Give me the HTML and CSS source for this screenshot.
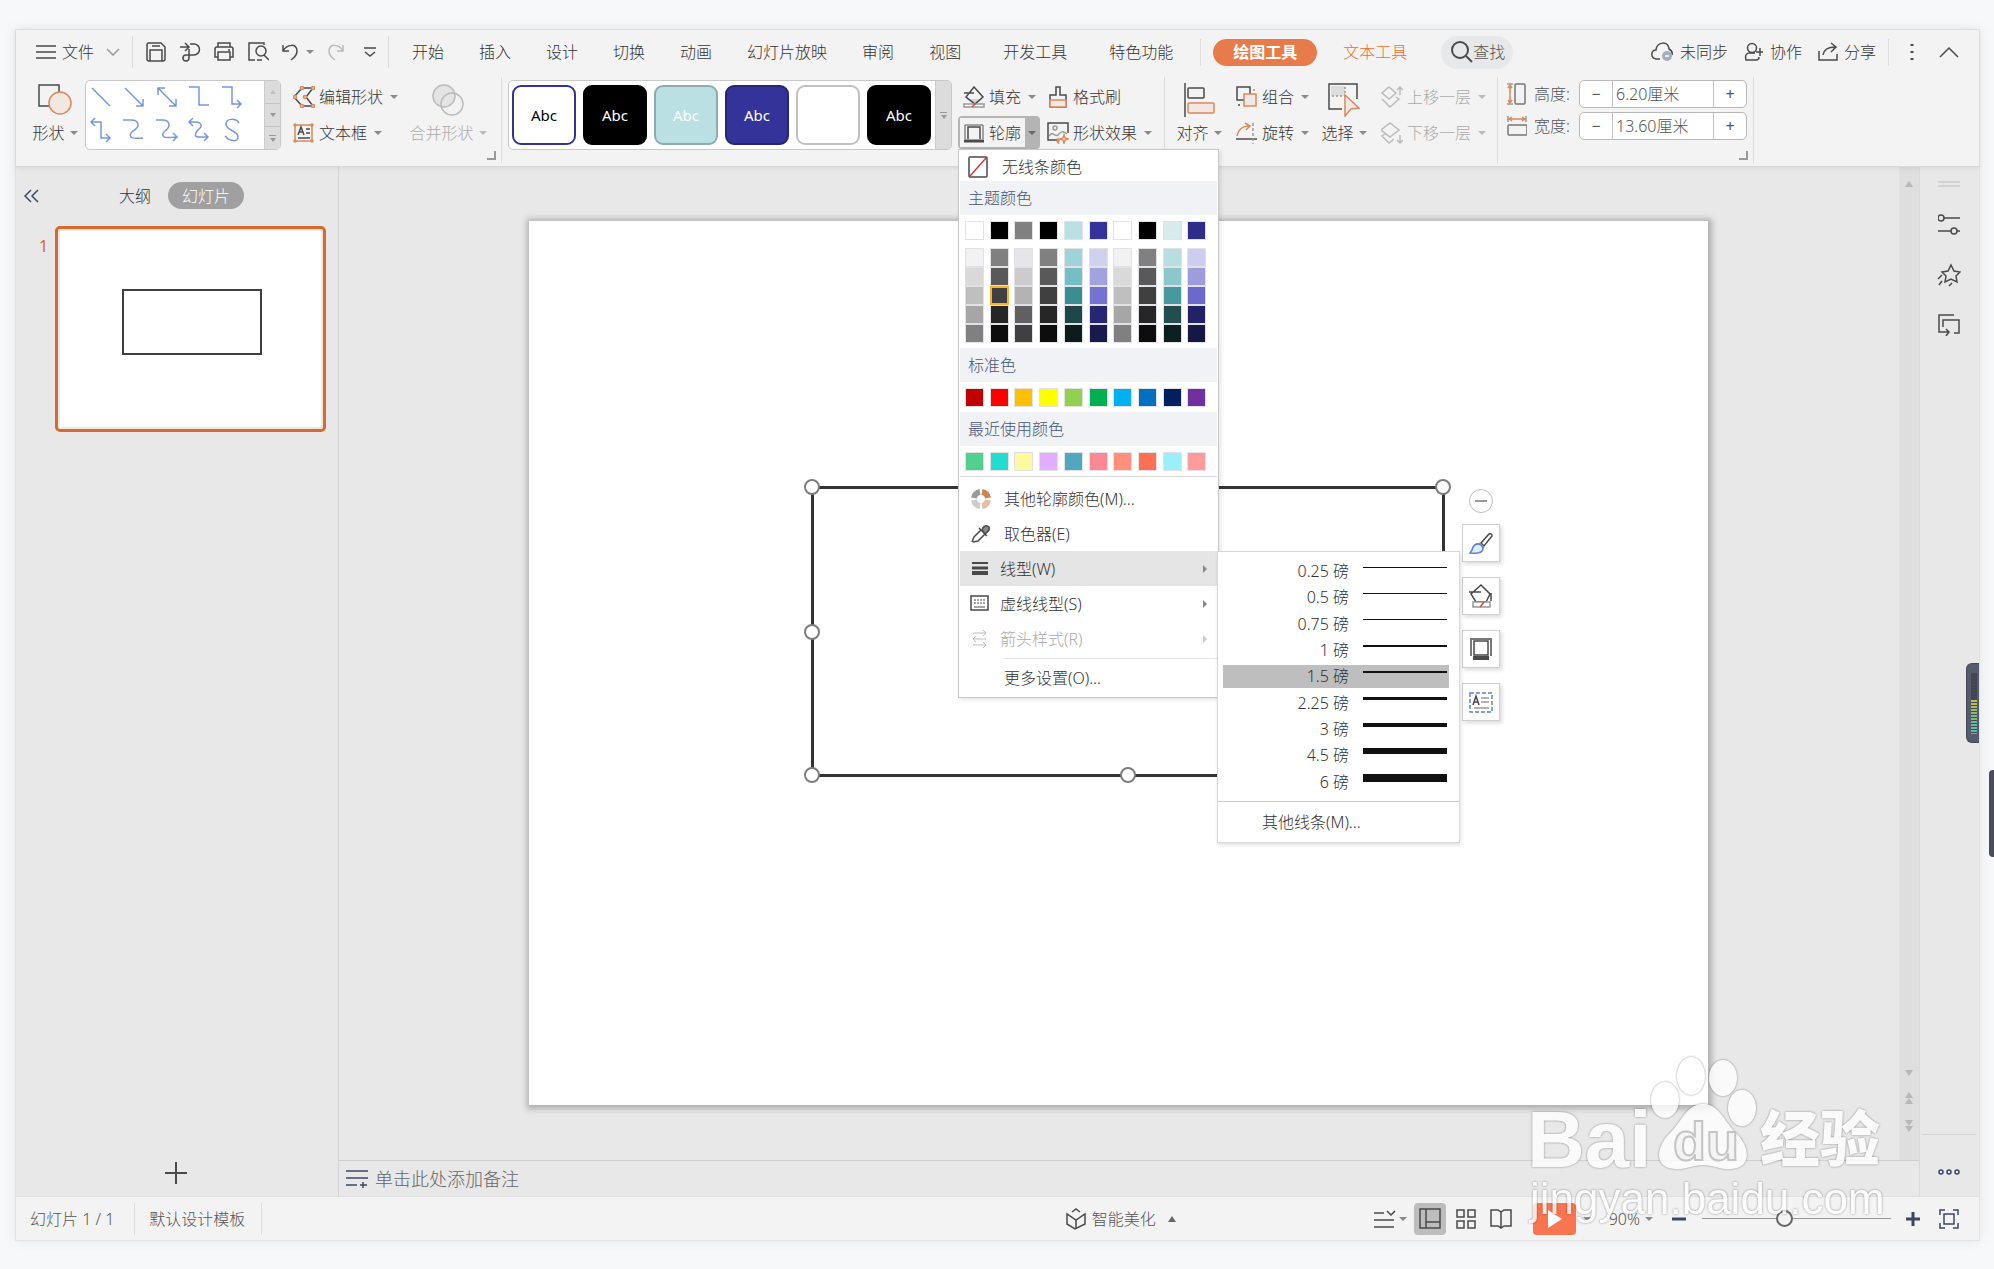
FILE: index.html
```html
<!DOCTYPE html>
<html lang="zh-CN">
<head>
<meta charset="utf-8">
<title>演示文稿</title>
<link rel="stylesheet" href="styles.css">
</head>
<body>
<div class="app">
  <header class="top">
    <nav class="menubar">
      <button class="file"><svg width="20" height="20" viewBox="0 0 20 20"><path d="M0 4h20M0 10h20M0 16h20"/></svg><span>文件</span><svg class="dim" width="14" height="8" viewBox="0 0 14 8"><path d="M1 1l6 6 6-6"/></svg></button>
      <i class="rule"></i>
      <div class="quick">
        <button aria-label="保存"><svg width="21" height="20" viewBox="0 0 21 20"><path d="M1 3q0-2 2-2h12l4 4v12q0 2-2 2H3q-2 0-2-2zM4 19V8h12v11M6 4h8"/></svg></button>
        <button aria-label="输出"><svg width="21" height="20" viewBox="0 0 21 20"><path d="M0 5h8M5 1l4 4-4 4M10 2h4a5 5 0 0 1 0 11H6a3 3 0 1 0 3 3V7"/></svg></button>
        <button aria-label="打印"><svg width="21" height="20" viewBox="0 0 21 20"><path d="M4 5V1h12v4M4 15H1V7q0-2 2-2h14q2 0 2 2v8h-3M4 10h12v8H4zM14 8h2"/></svg></button>
        <button aria-label="预览"><svg width="21" height="20" viewBox="0 0 21 20"><path d="M7 18H1V1h15v2"/><circle cx="13" cy="9" r="5"/><path d="M16 13l5 5M9 18h5"/></svg></button>
        <button class="undo" aria-label="撤销"><svg width="18" height="20" viewBox="0 0 18 20"><path d="M1 3v6h6M1 9C5 2 15 1 15 9q0 5-6 9"/></svg><b class="caret"></b></button>
        <button class="redo off" aria-label="恢复" disabled><svg width="18" height="20" viewBox="0 0 18 20"><path d="M16 3v6h-6M16 9C12 2 2 1 2 9q0 5 6 9"/></svg></button>
        <button class="more" aria-label="更多"><svg width="12" height="12" viewBox="0 0 12 12"><path d="M0 2h12M1 6l5 4 5-4"/></svg></button>
      </div>
      <i class="rule"></i>
      <div class="tabs">
        <button>开始</button><button>插入</button><button>设计</button><button>切换</button><button>动画</button><button>幻灯片放映</button><button>审阅</button><button>视图</button><button class="far">开发工具</button><button class="far">特色功能</button>
      </div>
      <i class="rule short"></i>
      <button class="pill-tab">绘图工具</button>
      <button class="text-tab">文本工具</button>
      <button class="find"><svg width="22" height="22" viewBox="0 0 22 22"><circle cx="9" cy="9" r="8"/><path d="M15 15l6 6"/></svg>查找</button>
      <div class="account">
        <button><svg width="23" height="20" viewBox="0 0 23 20"><path d="M9 17H5C-1 16 0 8 5 8 6-1 18-1 18 7q4 2 3 6"/><circle cx="16" cy="14" r="5" class="badge"/><path d="M14 14h4" class="w"/></svg>未同步</button>
        <button><svg width="20" height="20" viewBox="0 0 20 20"><circle cx="8" cy="6" r="4.500"/><path d="M12 18H2q-2-7 4-7h5M12 18q3 0 3-3M12 10h7M16 6v8"/></svg>协作</button>
        <button><svg width="20" height="20" viewBox="0 0 20 20"><path d="M1 9v9h18v-6M5 13C6 7 10 5 17 5M13 1l5 4-5 5"/></svg>分享</button>
        <i class="rule short"></i>
        <button aria-label="菜单"><svg width="4" height="18" viewBox="0 0 4 18"><path d="M2 1v2M2 8v2M2 15v2" stroke-width="3"/></svg></button>
        <button aria-label="折叠"><svg width="20" height="12" viewBox="0 0 20 12"><path d="M1 11l9-9 9 9"/></svg></button>
      </div>
    </nav>

    <div class="ribbon">
      <button class="big shape"><svg width="34" height="32" viewBox="0 0 34 32"><path d="M1 1h20v21H1z"/><circle cx="22" cy="19" r="11" class="of"/></svg><span>形状<b class="caret"></b></span></button>
      <div class="lines">
        <svg width="178" height="67" viewBox="0 0 178 67"><path d="M6 7l18 18M39 7l18 18M57 18v7h-7M72 7l18 18M72 14V7h7M90 18v7h-7M103 6h10v18h10M136 6h10v17h9M151 19l4 4-4 4M5 41h10v16h9M9 37l-4 4 4 4M20 53l4 4-4 4M37 39h8q7 0 7 5 0 3-5 6-4 3-2 6 1 2 12 1M70 39h6q7 0 7 5 0 3-4 6-4 3-1 6 1 1 13 0M87 52l4 4-4 4M103 41h6q7 0 6 5l-4 4q-4 6 2 6h9M107 37l-4 4 4 4M118 52l4 4-4 4M153 42c-3-5-13-5-13 1 0 7 12 6 12 13 0 5-8 5-13-1"/></svg>
        <div class="spin"><i class="up"></i><i class="dn"></i><i class="ex"></i></div>
      </div>
      <div class="stack edit">
        <button><svg width="22" height="22" viewBox="0 0 22 22"><path d="M9 2h11l-7 9 7 9H9L1 11z"/><g class="of"><circle cx="9" cy="2" r="1.500"/><circle cx="20" cy="2" r="1.500"/><circle cx="12" cy="11" r="1.500"/><circle cx="20" cy="20" r="1.500"/><circle cx="9" cy="20" r="1.500"/><circle cx="2" cy="11" r="1.500"/></g></svg>编辑形状<b class="caret"></b></button>
        <button><svg width="22" height="20" viewBox="0 0 22 20"><path d="M2 2h17v16H2z" class="o"/><path d="M5 12l3-8 3 8M6 9h4M13 6h4M13 10h4M5 15h12"/><g class="of"><circle cx="2" cy="2" r="1"/><circle cx="19" cy="2" r="1"/><circle cx="2" cy="18" r="1"/><circle cx="19" cy="18" r="1"/></g></svg>文本框<b class="caret"></b></button>
      </div>
      <button class="big merge off" disabled><svg width="34" height="32" viewBox="0 0 34 32"><circle cx="13" cy="12" r="11" fill="#e4e4e4"/><circle cx="21" cy="20" r="11"/></svg><span>合并形状<b class="caret"></b></span></button>
      <i class="rule tall corner"></i>
      <div class="styles">
        <button class="t1">Abc</button><button class="t2">Abc</button><button class="t3">Abc</button><button class="t4">Abc</button><button class="t5" aria-label="无"></button><button class="t2">Abc</button>
        <div class="spin"><i class="ex"></i></div>
      </div>
      <div class="stack paint">
        <button class="fill"><svg width="22" height="22" viewBox="0 0 22 22"><path d="M3 13h17l-8 6z" fill="#d5d5d5" stroke="none"/><path d="M11 1l9 10-8 7-9-7zM1 7h10"/><path d="M1 18h20v3H1z" fill="#fff" stroke="#999"/><path d="M9 21l4-4" stroke="#d44"/></svg>填充<b class="caret"></b></button>
        <div class="outline-wrap">
          <button class="outline"><span><svg width="22" height="20" viewBox="0 0 22 20"><path d="M2 16V2h18v14" stroke="#555" stroke-width="1"/><path d="M5 16V4h12v12"/><path d="M1 18h20" stroke-width="3"/></svg>轮廓</span><b class="caret"></b></button>
          <div class="menu">
            <button class="none"><svg width="20" height="22" viewBox="0 0 20 22"><rect x="1" y="1" width="18" height="20" rx="1"/><path d="M2 20L18 2" stroke="#cc3d3d"/></svg>无线条颜色</button>
            <h3>主题颜色</h3>
            <div class="swatches base" data-set="base"></div>
            <div class="swatches shades" data-set="shades"></div>
            <h3>标准色</h3>
            <div class="swatches" data-set="standard"></div>
            <h3>最近使用颜色</h3>
            <div class="swatches" data-set="recent"></div>
            <div class="items">
              <button class="wide"><svg width="22" height="22" viewBox="0 0 22 22"><g fill="none" stroke-width="6"><path d="M4 10a7 7 0 0 1 6-6" stroke="#999"/><path d="M12 4a7 7 0 0 1 6 6" stroke="#cd8453"/><path d="M18 12a7 7 0 0 1-6 6" stroke="#e5bea6"/><path d="M10 18a7 7 0 0 1-6-6" stroke="#ccc"/></g></svg>其他轮廓颜色(M)...</button>
              <button class="wide"><svg width="22" height="22" viewBox="0 0 22 22"><path d="M2 19l2-5 7-7 4 4-7 7-5 1M9 5l8 8" /><path d="M12 7c2-6 9-5 7 0 0 1-2 2-4 4z" fill="#888"/></svg>取色器(E)</button>
              <div class="sub-wrap">
                <button class="on"><svg width="20" height="20" viewBox="0 0 20 20"><path d="M2 4h16" stroke-width="2"/><path d="M2 9h16" stroke-width="3"/><path d="M2 14h16" stroke-width="4"/></svg>线型(W)<b class="next"></b></button>
                <div class="submenu">
                  <div class="weights">
                    <button>0.25 磅<i style="height:1px"></i></button>
                    <button>0.5 磅<i style="height:1px"></i></button>
                    <button>0.75 磅<i style="height:1px"></i></button>
                    <button>1 磅<i style="height:2px"></i></button>
                    <button class="sel">1.5 磅<i style="height:2px"></i></button>
                    <button>2.25 磅<i style="height:3px"></i></button>
                    <button>3 磅<i style="height:4px"></i></button>
                    <button>4.5 磅<i style="height:6px"></i></button>
                    <button>6 磅<i style="height:8px"></i></button>
                  </div>
                  <button class="other">其他线条(M)...</button>
                </div>
              </div>
              <button><svg width="20" height="20" viewBox="0 0 20 20"><path d="M1 2h17v14H1z"/><path d="M4 6h11M4 9h11" stroke-dasharray="2 1" stroke-width="1"/><path d="M4 13h11" stroke-width="1"/></svg>虚线线型(S)<b class="next"></b></button>
              <button class="off" disabled><svg width="20" height="20" viewBox="0 0 20 20"><path d="M3 4h13M13 1l3 3-3 3M3 10h13M6 7l-3 3 3 3M3 16h13M13 13l3 3-3 3" stroke-width="1"/></svg>箭头样式(R)<b class="next"></b></button>
              <hr>
              <button class="plain">更多设置(O)...</button>
            </div>
          </div>
        </div>
      </div>
      <div class="stack effect">
        <button><svg width="22" height="24" viewBox="0 0 22 24"><path d="M9 10V2h4v8h6v12H3V10z"/><path d="M3 15h16v7H3z" class="of"/></svg>格式刷</button>
        <button><svg width="22" height="22" viewBox="0 0 22 22"><path d="M10 18H1V1h20v10"/><circle cx="8" cy="6" r="2" stroke="#999"/><path d="M2 14c4-6 6 2 9-1 3-4 5-4 9-1" stroke="#999"/><path d="M17 13l1 3 3 1-3 1-1 3-1-3-3-1 3-1zM11 17l1 2-1 2-1-2z" class="of"/></svg>形状效果<b class="caret"></b></button>
      </div>
      <i class="rule tall"></i>
      <button class="big align"><svg width="32" height="34" viewBox="0 0 32 34"><path d="M2 0v34"/><rect x="5" y="5" width="16" height="10" rx="1"/><rect x="5" y="20" width="26" height="10" rx="1" class="of"/></svg><span>对齐<b class="caret"></b></span></button>
      <div class="stack group">
        <button><svg width="22" height="22" viewBox="0 0 22 22"><rect x="1" y="1" width="13" height="13"/><rect x="8" y="8" width="12" height="12" class="of"/><path d="M18 3v2" class="o"/><path d="M3 18v2"/></svg>组合<b class="caret"></b></button>
        <button><svg width="22" height="22" viewBox="0 0 22 22"><path d="M1 14Q3 4 13 4M9 1l5 3-4 4" class="o"/><path d="M0 17h21"/><path d="M17 1v21" stroke="#999" stroke-dasharray="3 2"/></svg>旋转<b class="caret"></b></button>
      </div>
      <button class="big select"><svg width="32" height="34" viewBox="0 0 32 34"><path d="M3 3h14v10H3z" fill="#ddd" stroke="none"/><path d="M14 26H1V1h28v15"/><path d="M4 13h13M17 4v9" stroke="#999" stroke-dasharray="2 2"/><path d="M17 12l14 13-8 1-6 7z" class="of"/></svg><span>选择<b class="caret"></b></span></button>
      <div class="stack layer">
        <button class="off" disabled><svg width="22" height="22" viewBox="0 0 22 22"><path d="M8 1l7 6-7 6-7-6zM1 13l8 8 9-8-3-2M19 9V1M16 4l3-3 3 3"/></svg>上移一层<b class="caret"></b></button>
        <button class="off" disabled><svg width="22" height="22" viewBox="0 0 22 22"><path d="M9 1l9 7-9 7-9-7zM4 12l-3 2 7 7 5-4M19 13v8M16 18l3 3 3-3"/></svg>下移一层<b class="caret"></b></button>
      </div>
      <i class="rule tall"></i>
      <div class="size">
        <div class="row"><svg width="20" height="22" viewBox="0 0 20 22"><rect x="8" y="1" width="10" height="20" rx="1" stroke="#777"/><path d="M0 1h6M0 21h6" stroke="#999"/><path d="M3 3v16M1 5l2-3 2 3M1 17l2 3 2-3" class="o"/></svg><label for="h">高度:</label><div class="stepper"><button>−</button><input id="h" value="6.20厘米"><button>+</button></div></div>
        <div class="row"><svg width="20" height="22" viewBox="0 0 20 22"><rect x="1" y="10" width="19" height="10" rx="1" stroke="#777"/><path d="M1 1v6M19 1v6" stroke="#999"/><path d="M3 4h14M5 2L2 4l3 2M15 2l3 2-3 2" class="o"/></svg><label for="w">宽度:</label><div class="stepper"><button>−</button><input id="w" value="13.60厘米"><button>+</button></div></div>
      </div>
      <i class="rule tall corner"></i>
    </div>
  </header>

  <main class="work">
    <aside class="panel">
      <div class="panel-head">
        <button aria-label="收起"><svg class="navy" width="15" height="14" viewBox="0 0 15 14"><path d="M7 1L1 7l6 6M14 1L8 7l6 6"/></svg></button>
        <button class="outline-tab">大纲</button><button class="slides-tab">幻灯片</button>
      </div>
      <div class="thumb-row"><span>1</span><button class="thumb" aria-label="幻灯片 1"><i></i></button></div>
      <button class="add" aria-label="新建"><svg width="22" height="22" viewBox="0 0 22 22"><path d="M11 0v22M0 11h22" stroke-width="2"/></svg></button>
    </aside>

    <section class="center">
      <div class="stage">
        <div class="canvas">
          <div class="slide">
            <div class="rect">
              <i class="h nw"></i><i class="h ne"></i><i class="h w"></i><i class="h sw"></i><i class="h s"></i>
              <div class="floats">
                <button class="round" aria-label="收起"></button>
                <button aria-label="样式"><svg width="26" height="26" viewBox="0 0 26 26"><path d="M13 13l8-9q3-1 3 2l-8 10z"/><path d="M2 23q2-2 3-6 3-5 8-2 4 4 0 7-4 2-11 1zM11 13l5 5" stroke="#5b84d8" fill="#e3ecfb"/></svg></button>
                <button aria-label="填充"><svg width="26" height="26" viewBox="0 0 26 26"><path d="M13 2l9 9-4 8H8l-5-8zM1 9h12M23 10v8"/><path d="M5 19h17v5H5z" stroke="#999" fill="#fff"/><path d="M12 24l4-5" stroke="#d44"/></svg></button>
                <button aria-label="轮廓"><svg width="26" height="26" viewBox="0 0 26 26"><path d="M3 20V3h20v17" stroke="#777" stroke-width="2"/><rect x="6" y="5" width="14" height="14"/><path d="M5 22h16" stroke-width="4"/></svg></button>
                <button aria-label="文本"><svg width="26" height="26" viewBox="0 0 26 26"><path d="M2 4h22v19H2z" stroke="#5b84d8" stroke-dasharray="4 2"/><path d="M5 16l3-9 3 9M6 13h4"/><path d="M13 9h8M13 13h8M6 19h15" stroke="#999"/></svg></button>
              </div>
            </div>
          </div>
        </div>
        <div class="scroll"><i class="tri up"></i><span></span><i class="tri dn"></i><div><i class="tri up"></i><i class="tri up"></i></div><div><i class="tri dn"></i><i class="tri dn"></i></div></div>
      </div>
      <div class="notes"><svg class="navy" width="22" height="20" viewBox="0 0 22 20"><path d="M0 2h22M0 9h22M0 16h11M14 16h7M17 13v6"/></svg>单击此处添加备注</div>
    </section>

    <aside class="side">
      <svg width="22" height="6" viewBox="0 0 22 6"><path d="M0 1h22M0 5h22" stroke="#bbb" stroke-width="1"/></svg>
      <button aria-label="属性"><svg width="22" height="22" viewBox="0 0 22 22"><circle cx="3" cy="4" r="3"/><path d="M6 4h16M0 17h13M19 17h3"/><circle cx="16" cy="17" r="3"/></svg></button>
      <button aria-label="动画"><svg width="24" height="24" viewBox="0 0 24 24"><path d="M14 2l3 6 6 1-4 4 1 6-6-3-6 3 1-6-4-4 6-1zM5 12l-4 4M5 18l-3 4M15 20l-3 3"/></svg></button>
      <button aria-label="切换"><svg width="22" height="22" viewBox="0 0 22 22"><path d="M16 1H1v17h9M7 18l4 0M8 15l3 3-3 4M5 13V6h16v13h-5"/></svg></button>
      <button class="dots" aria-label="更多"><svg class="navy" width="22" height="8" viewBox="0 0 22 8"><circle cx="3" cy="4" r="2"/><circle cx="11" cy="4" r="2"/><circle cx="19" cy="4" r="2"/></svg></button>
      <i class="meter"></i>
    </aside>
  </main>

  <footer class="status">
    <span class="cell">幻灯片 1 / 1</span><span class="cell">默认设计模板</span>
    <button class="beauty"><svg width="20" height="22" viewBox="0 0 20 22"><path d="M6 4l4-3 4 3M1 6v10l8 5 10-5V6l-9 6zM10 12v9"/></svg>智能美化<i class="tri up"></i></button>
    <div class="views">
      <button class="lay" aria-label="备注"><svg width="22" height="20" viewBox="0 0 22 20"><path d="M0 4h10M13 2l4 4 4-4M0 11h20M0 18h20"/></svg><b class="caret"></b></button>
      <button class="active" aria-label="普通"><svg width="22" height="22" viewBox="0 0 22 22"><path d="M1 1h20v19H1zM7 1v19M7 14h14"/></svg></button>
      <button class="sorter" aria-label="浏览"><svg width="20" height="20" viewBox="0 0 20 20"><path d="M1 1h7v7H1zM12 1h7v7h-7zM1 12h7v7H1zM12 12h7v7h-7z"/></svg></button>
      <button class="read" aria-label="阅读"><svg width="22" height="22" viewBox="0 0 22 22"><path d="M1 2h7l3 2 3-2h7v16h-7l-3 2-3-2H1zM11 4v16"/></svg></button>
      <button class="play" aria-label="放映"><svg width="20" height="20" viewBox="0 0 20 20"><path d="M4 1l14 9-14 9z" fill="#fff" stroke="none"/></svg></button>
      <b class="caret c1"></b><span class="pct">90%</span><b class="caret c2"></b>
      <button class="minus" aria-label="缩小"><svg class="navy" width="14" height="14" viewBox="0 0 14 14"><path d="M0 7h14" stroke-width="3"/></svg></button>
      <input type="range" min="0" max="100" value="43" aria-label="缩放">
      <button class="plus" aria-label="放大"><svg class="navy" width="14" height="14" viewBox="0 0 14 14"><path d="M0 7h14M7 0v14" stroke-width="3"/></svg></button>
      <button aria-label="适应"><svg class="navy" width="20" height="20" viewBox="0 0 20 20"><path d="M1 6V1h5M14 1h5v5M19 14v5h-5M6 19H1v-5M5 5h10v10H5z"/></svg></button>
    </div>
  </footer>
</div>
<i class="edge"></i>
<svg class="mark" width="370" height="180" viewBox="0 0 370 180">
  <g class="ink">
    <text x="2" y="117" class="m-brand">Bai</text>
    <ellipse cx="166" cy="26" rx="14" ry="19"/><ellipse cx="198" cy="28" rx="14" ry="18"/><ellipse cx="140" cy="50" rx="14" ry="18"/><ellipse cx="217" cy="58" rx="14" ry="18"/>
    <path d="M178 54c16 0 21 17 32 28 16 15 17 36-4 37-10 1-18-4-28-4s-18 5-28 4c-21-1-20-22-4-37 11-11 16-28 32-28z"/>
    <text x="235" y="111" class="m-cn">经验</text>
    <text x="5" y="164" class="m-url">jingyan.baidu.com</text>
  </g>
  <text x="148" y="110" class="m-du">du</text>
</svg>
<script src="script.js"></script>
</body>
</html>
```
FILE: styles.css
```css
* { box-sizing: border-box; }
body {
  margin: 0;
  padding: 29px 14px 29px 15px;
  background: #f7f8fa;
  color: #333;
  font: 300 16px/20px "Noto Sans", "Noto Sans CJK SC", sans-serif;
  position: relative;
  overflow-x: hidden;
}
button, input {
  font: inherit;
  color: inherit;
  background: none;
  border: 0;
  padding: 0;
  margin: 0;
}
button { white-space: nowrap; display: flex; align-items: center; }
svg { flex: none; fill: none; stroke: #4a4a4a; stroke-width: 1.5; display: block; }
.navy { stroke: #3c4763; }
.dim { stroke: #999; }
.o { stroke: #d88a5c; }
.of { stroke: #d88a5c; fill: #f3e8e1; }
.off { color: #aaa; }
.off svg { stroke: #bbb; }

.app {
  min-height: calc(100vh - 58px);
  display: flex;
  flex-direction: column;
  border: 1px solid #e2e2e2;
  background: #e8e8e8;
  box-shadow: 0 0 12px rgba(0, 0, 0, .08);
}
.top {
  background: #f3f3f3;
  border-bottom: 1px solid #d8d8d8;
  box-shadow: 0 1px 4px rgba(0, 0, 0, .08);
  position: relative;
  z-index: 3;
}
.rule { flex: none; width: 1px; height: 32px; background: #dcdcdc; }
.rule.short { height: 27px; }
.rule.tall { height: 86px; margin-top: -3px; position: relative; }
.rule.corner::before {
  content: "";
  position: absolute;
  right: 6px;
  bottom: 3px;
  width: 7px;
  height: 7px;
  border: solid #999;
  border-width: 0 2px 2px 0;
}
.caret {
  display: inline-block;
  flex: none;
  border: 4px solid transparent;
  border-top-color: #8a8a8a;
  border-bottom: 0;
}
.off .caret { border-top-color: #bbb; }
.tri { display: block; border: 4px solid transparent; width: 0; height: 0; }
.tri.up { border-bottom: 6px solid #b8b8b8; border-top: 0; }
.tri.dn { border-top: 6px solid #b8b8b8; border-bottom: 0; }

/* menu bar */
.menubar { display: flex; align-items: center; height: 44px; padding-left: 20px; }
.file { gap: 6px; margin-right: 12px; }
.file .dim { margin-left: 6px; }
.quick { display: flex; align-items: center; gap: 13px; margin: 0 12px 0 13px; }
.undo { gap: 6px; }
.more { margin-left: 6px; }
.tabs { display: flex; gap: 35px; margin: 0 27px 0 23px; }
.tabs .far { margin-left: 7px; }
.pill-tab {
  height: 27px;
  padding: 0 20px;
  margin-left: 12px;
  border-radius: 14px;
  background: #e87b4b;
  color: #fff;
  font-weight: 700;
}
.text-tab { color: #f26b2e; margin: 0 34px 0 26px; }
.find { height: 33px; padding: 0 8px 0 10px; border-radius: 17px; background: #e7e8ea; color: #555; }
.find svg { stroke-width: 2; }
.account { display: flex; align-items: center; gap: 16px; margin-left: auto; padding-right: 20px; }
.account button { gap: 6px; }
.account .rule { margin: 0 5px 0 -4px; }
.account button:last-child { margin-left: 9px; }
.badge { fill: #a4adc0; stroke: none; }
.w { stroke: #fff; }

/* ribbon */
.ribbon { display: flex; align-items: flex-start; height: 92px; padding: 6px 0 0 14px; }
.big { flex: none; flex-direction: column; height: 66px; padding-top: 3px; gap: 7px; }
.big svg { height: 34px; }
.big span { display: flex; align-items: center; gap: 5px; line-height: 18px; }
.stack { flex: none; display: flex; flex-direction: column; gap: 3px; }
.stack button { height: 33px; gap: 4px; }
.stack .caret { margin-left: 3px; }
.shape { width: 50px; }
.lines {
  flex: none;
  display: flex;
  width: 196px;
  height: 70px;
  margin-left: 5px;
  border: 1px solid #c8c8c8;
  border-radius: 5px;
  background: #fff;
  overflow: hidden;
}
.lines svg { stroke: #7797dc; }
.spin {
  flex: 1;
  display: flex;
  flex-direction: column;
  background: #dcdcdc;
  border-left: 1px solid #ccc;
}
.spin i { flex: 1; display: grid; place-items: center; border-bottom: 1px solid #c4c4c4; }
.spin i:last-child { border: 0; }
.spin i::after { content: ""; border: 3px solid transparent; border-top: 4px solid #999; border-bottom: 0; }
.spin .up::after { border-top: 0; border-bottom: 4px solid #c0c0c0; }
.spin .ex { align-content: center; gap: 2px; }
.spin .ex::before { content: ""; width: 7px; height: 1px; background: #999; }
.edit { width: 104px; margin-left: 12px; }
.merge { width: 78px; margin: 0 14px 0 12px; }
.styles {
  flex: none;
  display: flex;
  align-items: center;
  gap: 7px;
  width: 444px;
  height: 70px;
  margin-left: 6px;
  padding-left: 3px;
  border: 1px solid #c8c8c8;
  border-radius: 5px;
  background: #fff;
  overflow: hidden;
}
.styles button {
  flex: none;
  width: 64px;
  height: 60px;
  justify-content: center;
  border: 2px solid #000;
  border-radius: 9px;
  color: #fff;
  font-size: 15px;
  font-weight: 400;
}
.styles .t1 { border-color: #333396; color: #000; }
.styles .t2 { background: #000; }
.styles .t3 { background: #bae0e3; border-color: #8eacae; }
.styles .t4 { background: #333399; border-color: #262673; }
.styles .t5 { border-color: #c0c0c0; }
.styles .spin { align-self: stretch; margin-left: -3px; }
.paint { width: 82px; margin-left: 6px; }
.fill { padding-left: 5px; }
.stack .outline {
  gap: 0;
  width: 82px;
  padding: 2px;
  border-radius: 4px;
  background: #b4b4b4;
}
.outline span { display: flex; align-items: center; gap: 4px; width: 65px; height: 29px; padding-left: 3px; background: #f3f3f3; }
.outline .caret { border-top-color: #666; }
.effect { width: 110px; margin: 0 7px; }
.align { width: 44px; margin-left: 12px; }
.group { width: 72px; margin-left: 15px; }
.select { width: 44px; margin-left: 14px; }
.layer { width: 105px; margin: 0 11px 0 15px; }
.size { flex: none; display: flex; flex-direction: column; gap: 4px; margin: 0 6px 0 9px; }
.row { display: flex; align-items: center; color: #555; }
.row label { width: 45px; margin-left: 7px; }
.stepper {
  display: flex;
  width: 168px;
  height: 28px;
  border: 1px solid #b8b8b8;
  border-radius: 5px;
  background: #fff;
}
.stepper button { width: 32px; justify-content: center; font-weight: 400; }
.stepper input { flex: 1; min-width: 0; padding: 0 3px; border: solid #c0c0c0; border-width: 0 1px; }

/* outline menu */
.outline-wrap { position: relative; z-index: 2; }
.menu {
  position: absolute;
  top: 100%;
  left: 0;
  width: 261px;
  background: #fff;
  border: 1px solid #c8c8c8;
  box-shadow: 2px 2px 4px rgba(0, 0, 0, .1);
}
.menu .none { height: 31px; gap: 14px; padding: 2px 0 0 9px; }
.menu h3 {
  margin: 0 1px;
  height: 34px;
  padding-left: 8px;
  background: #f0f2f5;
  color: #46557a;
  font: inherit;
  line-height: 34px;
}
.swatches { display: grid; grid-template-columns: repeat(10, 1fr); padding: 6px 6px 5px; }
.swatches.base { padding-bottom: 2px; }
.stack .swatches button { width: 19px; height: 19px; border: 1px solid #e2e2e6; }
.stack .swatches .picked { border: 2px solid #fbb12d; }
.items { border-top: 1px solid #d8d8d8; margin: 0 1px; padding-top: 4px; }
.stack .items button { width: 100%; height: 35px; padding-left: 10px; gap: 10px; }
.stack .items .wide { gap: 12px; padding-left: 10px; }
.items .on { background: #e5e5e5; }
.items hr { border: 0; border-top: 1px solid #e2e2e2; margin: 2px 0 0 44px; }
.stack .items .plain { padding-left: 44px; height: 38px; }
.next { margin: 0 10px 0 auto; border: 4px solid transparent; border-left-color: #888; border-right: 0; }
.off .next { border-left-color: #ccc; }
.sub-wrap { position: relative; }
.submenu {
  position: absolute;
  left: 100%;
  top: 0;
  width: 243px;
  background: #fff;
  border: 1px solid #d8d8d8;
  box-shadow: 1px 2px 4px rgba(0, 0, 0, .12);
}
.weights { display: grid; grid-template-rows: repeat(9, 1fr); height: 250px; padding: 6px 10px 6px 5px; border-bottom: 1px solid #ccc; }
.stack .weights button { height: 23px; justify-content: flex-end; align-self: center; padding-right: 2px; gap: 14px; }
.weights i { width: 84px; background: #111; margin-bottom: 8px; }
.weights .sel { background: #bebebe; }
.stack .items .other { height: 40px; padding-left: 44px; }

/* work area */
.work { flex: 1; display: flex; }
.panel { width: 323px; display: flex; flex-direction: column; border-right: 1px solid #d4d4d4; }
.panel-head { display: flex; align-items: center; height: 59px; padding: 0 0 2px 8px; }
.outline-tab { margin: 0 17px 0 80px; }
.slides-tab { height: 27px; padding: 0 14px; border-radius: 14px; background: #a0a0a0; color: #fff; }
.thumb-row { display: flex; padding-left: 23px; color: #d86b2b; }
.thumb-row span { width: 16px; padding-top: 10px; font-weight: 400; }
.thumb {
  position: relative;
  flex: none;
  width: 271px;
  height: 206px;
  border: 3px solid #d86b2b;
  border-radius: 5px;
  background: #fff;
  box-shadow: inset 0 0 0 2px #e8e8e8;
}
.thumb i { position: absolute; left: 24%; top: 30%; width: 53%; height: 33%; border: 2px solid #404040; }
.add { margin: auto auto 12px; padding-right: 2px; }
.center { flex: 1; min-width: 0; display: flex; flex-direction: column; }
.stage { flex: 1; display: flex; }
.canvas { flex: 1; padding: 54px 191px 55px 190px; }
.slide {
  position: relative;
  aspect-ratio: 4 / 3;
  background: #fff;
  box-shadow: 1px 1px 6px 3px rgba(0, 0, 0, .25);
}
.rect { position: absolute; left: 23.9%; top: 30%; width: 53.8%; height: 32.9%; border: 3px solid #333; }
.h {
  position: absolute;
  width: 16px;
  height: 16px;
  margin: -10px;
  border: 2px solid #7d7d7d;
  border-radius: 50%;
  background: #fff;
}
.nw { left: 0; top: 0; }
.ne { left: 100%; top: 0; margin-left: -7px; }
.w.h { left: 0; top: 50%; margin-top: -8px; }
.sw { left: 0; top: 100%; margin-top: -7px; }
.s { left: 50%; top: 100%; margin: -7px -8px; }
.floats { position: absolute; left: 100%; top: 0; margin-left: 20px; display: flex; flex-direction: column; gap: 15px; }
.floats button { width: 38px; height: 38px; justify-content: center; background: #fff; border: 1px solid #d0d0d0; box-shadow: 2px 2px 4px rgba(0, 0, 0, .15); }
.floats .round { width: 24px; height: 24px; margin: 0 7px -4px; border: 1px solid #bbb; border-radius: 50%; box-shadow: none; }
.round::before { content: ""; width: 12px; height: 2px; background: #999; }
.scroll { width: 20px; background: #dedede; display: flex; flex-direction: column; align-items: center; gap: 16px; padding: 14px 0 28px; }
.scroll span { flex: 1; }
.notes { height: 36px; display: flex; align-items: center; gap: 7px; padding-left: 7px; border-top: 1px solid #cfcfcf; font-size: 18px; color: #666; }
.side { position: relative; width: 60px; display: flex; flex-direction: column; align-items: center; padding: 14px 1px 0 0; border-left: 1px solid #dadada; gap: 27px; }
.side .dots { margin-top: auto; width: 54px; height: 62px; padding-top: 12px; justify-content: center; border-top: 1px solid #d4d4d4; }
.meter {
  position: absolute;
  right: 0;
  top: 496px;
  width: 13px;
  height: 80px;
  border: 1px solid #454857;
  border-right: 0;
  border-radius: 6px 0 0 6px;
  background: #565b6c;
}
.meter::before {
  content: "";
  position: absolute;
  inset: 9px 2px 8px 4px;
  background: repeating-linear-gradient(transparent 0 2px, #454a58 2px 3px), linear-gradient(#414552 42%, #c9bc4c 45%, #83b679 70%, #4dbdb6);
}

/* status bar */
.status { height: 44px; display: flex; align-items: center; background: #f3f3f3; border-top: 1px solid #dfdfdf; color: #555; padding-right: 20px; }
.cell { height: 32px; line-height: 32px; padding: 0 20px 0 14px; border-right: 1px solid #dcdcdc; }
.cell + .cell { padding-right: 16px; }
.beauty { gap: 6px; margin: 0 198px 0 auto; }
.beauty .tri { border-bottom-color: #666; margin-left: 6px; }
.views { display: flex; align-items: center; }
.lay { gap: 3px; }
.active { width: 32px; height: 32px; justify-content: center; margin: 0 10px 0 7px; border-radius: 4px; background: #bdbdbd; }
.read { margin: 0 21px 0 14px; }
.play { width: 43px; height: 32px; justify-content: center; border-radius: 4px; background: #fb7450; }
.c1 { margin: 0 18px 0 7px; }
.c2 { margin: 0 19px 0 5px; }
.views input { appearance: none; width: 189px; height: 20px; margin: 0 15px 0 16px; background: linear-gradient(#999, #999) center / 100% 1px no-repeat; }
.views input::-webkit-slider-thumb { appearance: none; width: 17px; height: 17px; border: 2px solid #666; border-radius: 50%; background: #f3f3f3; }
.plus { margin-right: 19px; }

.edge { position: absolute; right: 0; top: 770px; width: 5px; height: 87px; border-radius: 4px 0 0 4px; background: #484d5c; }
.mark { position: absolute; right: 99px; bottom: 40px; z-index: 5; stroke: none; pointer-events: none; }
.ink { fill: #fff; opacity: .8; filter: drop-shadow(0 0 1px rgba(0, 0, 0, .5)); }
.m-brand { font: 700 80px "Liberation Sans", sans-serif; }
.m-cn { font: 900 60px "Noto Sans CJK SC", sans-serif; }
.m-url { font: 44px "Liberation Sans", sans-serif; }
.m-du { font: 700 54px "Liberation Sans", sans-serif; fill: #f4f4f4; stroke: #c4c4c4; stroke-width: 2; }
```
FILE: script.js
```js
const palettes = {
  base: "fff 000 808080 000 bae0e3 333399 fff 000 d7ebed 2d2d8a",
  shades: "f2f2f2 808080 e6e6e6 808080 9ed4d8 d0d0ef f2f2f2 808080 b9dee0 cdcdef " +
    "d9d9d9 595959 cccccc 595959 73bfc5 a2a2df d9d9d9 595959 8cc8cb 9d9ddd " +
    "bfbfbf 404040 b3b3b3 404040 3c8d93 7474d0 bfbfbf 404040 47999e 6a6acd " +
    "a6a6a6 262626 606060 262626 1e474a 262673 a6a6a6 262626 244d4f 222266 " +
    "808080 0d0d0d 404040 0d0d0d 0c1c1d 19194d 808080 0d0d0d 0e1f20 171744",
  standard: "c00000 ff0000 ffc000 ffff00 92d050 00b050 00b0f0 0070c0 002060 7030a0",
  recent: "52d08e 23dcd0 fcf99f e3adff 4fa8bf fc8795 ff917c ff6f51 9beffb ff9c9b"
};

for (const box of document.querySelectorAll("[data-set]")) {
  palettes[box.dataset.set].split(" ").forEach((hex, i) => {
    const b = document.createElement("button");
    b.style.background = "#" + hex;
    b.setAttribute("aria-label", "#" + hex);
    if (box.dataset.set === "shades" && i === 21) b.className = "picked";
    box.append(b);
  });
}
```
